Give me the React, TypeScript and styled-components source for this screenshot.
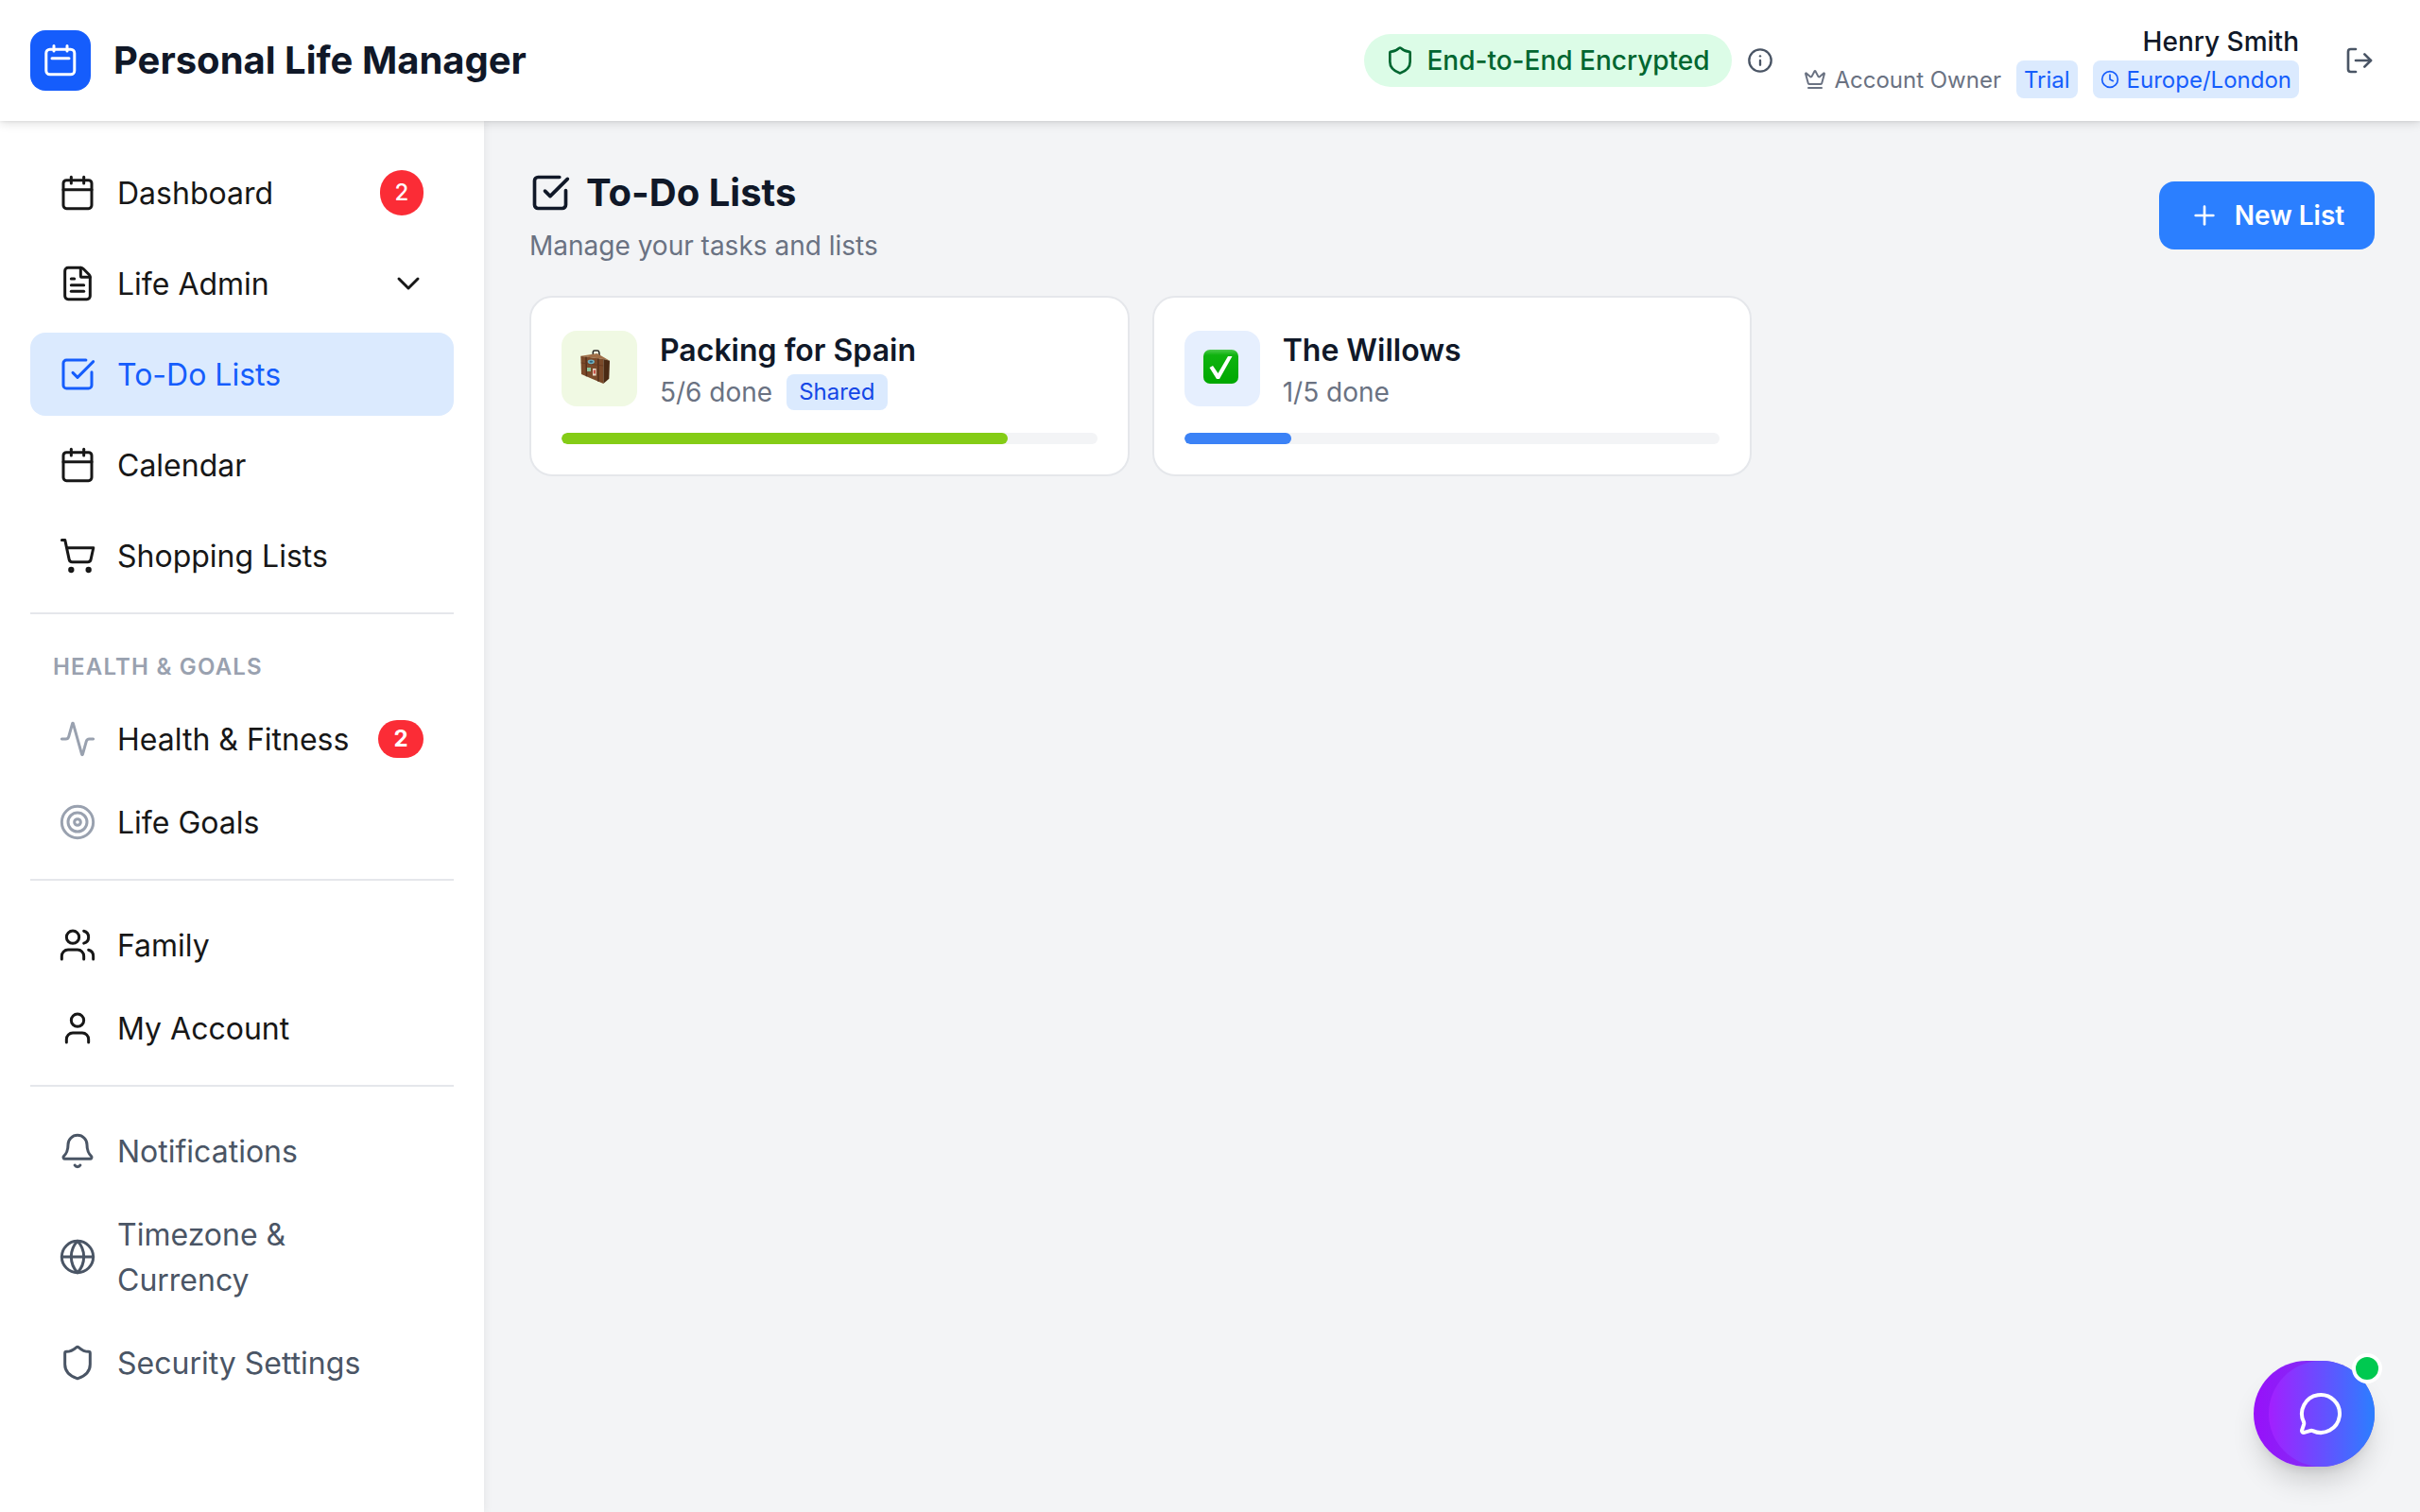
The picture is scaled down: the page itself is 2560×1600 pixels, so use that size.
import React from "react";
import styled, { createGlobalStyle } from "styled-components";
import {
  Activity, Bell, Calendar, ChevronDown, Clock, Crown, FileText, Globe, Info, LogOut,
  MessageCircle, Plus, Shield, ShoppingCart, SquareCheckBig, Target, User, Users,
} from "lucide-react";

const Global = createGlobalStyle`
  html, body { margin: 0; padding: 0; background: #f3f4f6; }
  body { font-family: Inter, "Noto Sans", sans-serif; color: #111827; }
  * { box-sizing: border-box; }
`;

const Page = styled.div`
  width: 2560px;
  height: 1600px;
  display: flex;
  flex-direction: column;
  overflow: hidden;
  position: relative;
`;

const Header = styled.header`
  height: 128px;
  flex: none;
  background: #fff;
  display: flex;
  align-items: center;
  padding: 0 48px 0 32px;
  box-shadow: 0 3px 10px rgba(0, 0, 0, 0.12), 0 1px 3px rgba(0, 0, 0, 0.06);
  position: relative;
  z-index: 2;
`;

const Logo = styled.div`
  width: 64px;
  height: 64px;
  border-radius: 16px;
  background: #155dfc;
  display: flex;
  align-items: center;
  justify-content: center;
  color: #fff;
`;

const Brand = styled.h1`
  margin: 0 0 0 24px;
  font-size: 40px;
  line-height: 56px;
  font-weight: 700;
  color: #101828;
`;

const HeaderRight = styled.div`
  margin-left: auto;
  display: flex;
  align-items: center;
`;

const Encrypted = styled.div`
  height: 56px;
  width: 389px;
  border-radius: 28px;
  background: #dcfce7;
  color: #016630;
  display: flex;
  align-items: center;
  gap: 12px;
  padding-left: 22px;
  font-size: 28px;
  font-weight: 500;
  white-space: nowrap;
`;

const InfoButton = styled.span`
  display: flex;
  color: #4a5565;
  margin-left: 16px;
`;

const UserBlock = styled.div`
  margin-left: 32px;
  display: flex;
  flex-direction: column;
  align-items: flex-end;
`;

const UserName = styled.div`
  font-size: 28px;
  line-height: 40px;
  font-weight: 500;
  color: #101828;
`;

const UserMeta = styled.div`
  display: flex;
  align-items: center;
  gap: 16px;
  height: 40px;
`;

const Role = styled.span`
  display: flex;
  align-items: center;
  gap: 8px;
  font-size: 24px;
  color: #6a7282;
  white-space: nowrap;
`;

const Tag = styled.span`
  height: 40px;
  display: flex;
  align-items: center;
  gap: 8px;
  padding: 0 8px;
  border-radius: 8px;
  background: #dbeafe;
  color: #155dfc;
  font-size: 24px;
  white-space: nowrap;
`;

const LogoutButton = styled.span`
  display: flex;
  color: #4a5565;
  margin-left: 48px;
`;

const Body = styled.div`
  flex: 1;
  display: flex;
  min-height: 0;
`;

const Sidebar = styled.aside`
  width: 512px;
  flex: none;
  background: #fff;
  padding: 32px 32px 0;
  box-shadow: 2px 0 8px rgba(0, 0, 0, 0.05);
`;

const NavGroup = styled.div`
  display: flex;
  flex-direction: column;
  gap: 8px;
`;

const Divider = styled.hr<{ $top: number; $bottom: number }>`
  border: 0;
  height: 2px;
  background: #e5e7eb;
  margin: ${(p) => `${p.$top}px 0 ${p.$bottom}px`};
`;

const NavRow = styled.div<{ $pad: number; $active?: boolean; $muted?: boolean }>`
  display: flex;
  align-items: center;
  gap: 22px;
  padding: ${(p) => p.$pad}px 30px;
  border-radius: 16px;
  font-size: 32px;
  line-height: 48px;
  background: ${(p) => (p.$active ? "#dbeafe" : "transparent")};
  color: ${(p) => (p.$active ? "#155dfc" : p.$muted ? "#4a5565" : "#171717")};
`;

const NavIcon = styled.span<{ $tone?: string }>`
  display: flex;
  flex: none;
  color: ${(p) => p.$tone || "inherit"};
`;

const NavLabel = styled.span`
  flex: 1;
  max-width: 290px;
  position: relative;
  top: 1px;
`;

const Badge = styled.span<{ $w: number; $h: number; $bold?: boolean }>`
  margin-left: auto;
  margin-right: 2px;
  width: ${(p) => p.$w}px;
  height: ${(p) => p.$h}px;
  border-radius: 24px;
  background: #fb2c36;
  color: #fff;
  display: flex;
  align-items: center;
  justify-content: center;
  font-size: 24px;
  line-height: 1;
  font-weight: ${(p) => (p.$bold ? 700 : 500)};
`;

const Chevron = styled.span`
  margin-left: auto;
  margin-right: -2px;
  display: flex;
`;

const SectionLabel = styled.div`
  padding: 0 24px;
  font-size: 24px;
  line-height: 32px;
  font-weight: 600;
  letter-spacing: 1.2px;
  color: #99a1af;
  text-transform: uppercase;
  margin-bottom: 20px;
`;

const Main = styled.main`
  flex: 1;
  padding: 48px 48px 0;
  min-width: 0;
`;

const PageHead = styled.div`
  display: flex;
  justify-content: space-between;
  align-items: flex-start;
  margin-bottom: 33px;
`;

const PageTitle = styled.h2`
  margin: 0;
  display: flex;
  align-items: center;
  gap: 16px;
  font-size: 40px;
  line-height: 56px;
  font-weight: 700;
  color: #101828;
`;

const PageSub = styled.p`
  margin: 8px 0 0;
  font-size: 28px;
  line-height: 40px;
  color: #6a7282;
`;

const NewButton = styled.button`
  margin-top: 16px;
  width: 228px;
  height: 72px;
  border: 0;
  border-radius: 16px;
  background: #2b7fff;
  color: #fff;
  display: flex;
  align-items: center;
  justify-content: center;
  gap: 16px;
  font: 600 28px Inter, sans-serif;
`;

const CardGrid = styled.div`
  display: grid;
  grid-template-columns: repeat(3, 1fr);
  gap: 24px;
`;

const Card = styled.article`
  height: 191px;
  background: #fff;
  border: 2px solid #e5e7eb;
  border-radius: 24px;
  padding: 35px 32px 0;
`;

const CardTop = styled.div`
  display: flex;
  gap: 24px;
  height: 80px;
  margin-bottom: 28px;
`;

const CardIcon = styled.div<{ $bg: string }>`
  width: 80px;
  height: 80px;
  border-radius: 16px;
  background: ${(p) => p.$bg};
  display: flex;
  align-items: center;
  justify-content: center;
  flex: none;
`;

const CardTitle = styled.div`
  font-size: 32px;
  line-height: 44px;
  font-weight: 600;
  color: #101828;
  margin-top: -1px;
  margin-bottom: 2px;
`;

const CardMeta = styled.div`
  display: flex;
  align-items: center;
  gap: 15px;
  font-size: 28px;
  line-height: 40px;
  color: #6a7282;
`;

const SharedTag = styled.span`
  height: 38px;
  padding: 0 13px;
  display: flex;
  align-items: center;
  border-radius: 8px;
  background: #dbeafe;
  color: #1447e6;
  font-size: 24px;
`;

const Track = styled.div`
  height: 12px;
  border-radius: 6px;
  background: #f3f4f6;
  overflow: hidden;
`;

const Fill = styled.div<{ $color: string }>`
  height: 100%;
  border-radius: 6px;
  background: ${(p) => p.$color};
`;

const Fab = styled.button`
  position: absolute;
  right: 48px;
  bottom: 48px;
  width: 128px;
  height: 112px;
  border: 0;
  border-radius: 56px;
  background: linear-gradient(90deg, #9810fa, #6a4cf0);
  color: #fff;
  display: flex;
  align-items: center;
  justify-content: center;
  padding: 0 0 0 14px;
  box-shadow: 0 20px 30px -6px rgba(0, 0, 0, 0.16), 0 8px 12px -6px rgba(0, 0, 0, 0.1);
  z-index: 3;
  &::before {
    content: "";
    position: absolute;
    top: 0;
    right: 0;
    width: 112px;
    height: 112px;
    border-radius: 50%;
    background: linear-gradient(90deg, #a31fff, #2b7fff);
  }
  svg { position: relative; }
`;

const Dot = styled.span`
  position: absolute;
  top: -8px;
  right: -8px;
  width: 32px;
  height: 32px;
  border-radius: 50%;
  background: #00c950;
  border: 4px solid #fff;
`;

const Suitcase = () => (
  <svg width="40" height="40" viewBox="0 0 40 40">
    <path d="M13.3 6V2.5Q13.3 1 15 1H18Q19.5 1 19.7 2.5L20.3 7" fill="none" stroke="#2f2a28" strokeWidth="1.6" />
    <path d="M0.3 6.7 17.7 4 31 11.7 24.3 10Z" fill="#a06f48" />
    <path d="M0.3 6.7 24.3 10 24.3 36 1 26Z" fill="#7b4a2a" />
    <path d="M24.3 10 31 11.7 30.3 30.7 24.3 36Z" fill="#4a2a14" />
    <path d="M6 7.8 6.5 28.3M18.8 9.4 19 33.8" stroke="#54301a" strokeWidth="1.5" />
    <path d="M0.8 14 24.3 17" stroke="#64391f" strokeWidth="0.8" />
    <ellipse cx="11.3" cy="12.8" rx="3.6" ry="2.4" fill="#6fb0c0" />
    <ellipse cx="11.3" cy="12.8" rx="1.8" ry="1" fill="#2f5f78" />
    <rect x="7" y="19" width="4" height="4" fill="#8cc49a" />
    <rect x="13" y="20" width="3.6" height="7.5" fill="#e6dac8" />
    <rect x="13.8" y="21.5" width="2" height="4" fill="#c9473d" />
  </svg>
);

const CheckEmoji = () => (
  <svg width="40" height="40" viewBox="0 0 40 40">
    <defs>
      <linearGradient id="g" x1="0" y1="0" x2="0" y2="1">
        <stop offset="0" stopColor="#4cc94c" />
        <stop offset="0.16" stopColor="#0fb30f" />
        <stop offset="1" stopColor="#00a800" />
      </linearGradient>
    </defs>
    <rect x="0" y="0" width="37" height="36" rx="7" fill="url(#g)" />
    <path d="M6.5 19 10 17 15.5 25 26 7H30.5L17 31H14Z" fill="#fff" />
  </svg>
);

const LogoGlyph = () => (
  <svg width="40" height="40" viewBox="0 0 40 40" fill="none" stroke="currentColor" strokeWidth="3" strokeLinecap="round">
    <rect x="4.8" y="8.2" width="30" height="26.6" rx="4" />
    <path d="M13 4.5V10M27 4.5V10M11 17.7H29" />
  </svg>
);

type Item = { label: string; Icon: React.ElementType; tone?: string; badge?: [number, number, boolean?]; chevron?: boolean; active?: boolean };

const group1: Item[] = [
  { label: "Dashboard", Icon: Calendar, badge: [46, 48] },
  { label: "Life Admin", Icon: FileText, chevron: true },
  { label: "To-Do Lists", Icon: SquareCheckBig, active: true },
  { label: "Calendar", Icon: Calendar },
  { label: "Shopping Lists", Icon: ShoppingCart },
];
const group2: Item[] = [
  { label: "Health & Fitness", Icon: Activity, tone: "#99a1af", badge: [48, 40, true] },
  { label: "Life Goals", Icon: Target, tone: "#99a1af" },
];
const group3: Item[] = [
  { label: "Family", Icon: Users },
  { label: "My Account", Icon: User },
];
const group4: Item[] = [
  { label: "Notifications", Icon: Bell },
  { label: "Timezone & Currency", Icon: Globe },
  { label: "Security Settings", Icon: Shield },
];

const NavList = ({ items, pad, muted }: { items: Item[]; pad: number; muted?: boolean }) => (
  <NavGroup>
    {items.map(({ label, Icon, tone, badge, chevron, active }) => (
      <NavRow key={label} $pad={pad} $active={active} $muted={muted}>
        <NavIcon $tone={tone}><Icon size={40} strokeWidth={1.8} /></NavIcon>
        <NavLabel>{label}</NavLabel>
        {badge && <Badge $w={badge[0]} $h={badge[1]} $bold={badge[2]}>2</Badge>}
        {chevron && <Chevron><ChevronDown size={40} strokeWidth={1.8} /></Chevron>}
      </NavRow>
    ))}
  </NavGroup>
);

export default function App() {
  return (
    <Page>
      <Global />
      <Header>
        <Logo><LogoGlyph /></Logo>
        <Brand>Personal Life Manager</Brand>
        <HeaderRight>
          <Encrypted><Shield size={32} strokeWidth={2} />End-to-End Encrypted</Encrypted>
          <InfoButton><Info size={28} strokeWidth={2} /></InfoButton>
          <UserBlock>
            <UserName>Henry Smith</UserName>
            <UserMeta>
              <Role><Crown size={24} strokeWidth={2} />Account Owner</Role>
              <Tag>Trial</Tag>
              <Tag><Clock size={20} strokeWidth={2} />Europe/London</Tag>
            </UserMeta>
          </UserBlock>
          <LogoutButton><LogOut size={32} strokeWidth={2} /></LogoutButton>
        </HeaderRight>
      </Header>
      <Body>
        <Sidebar>
          <NavList items={group1} pad={20} />
          <Divider $top={16} $bottom={40} />
          <SectionLabel>Health &amp; Goals</SectionLabel>
          <NavList items={group2} pad={16} />
          <Divider $top={20} $bottom={28} />
          <NavList items={group3} pad={16} />
          <Divider $top={20} $bottom={28} />
          <NavList items={group4} pad={16} muted />
        </Sidebar>
        <Main>
          <PageHead>
            <div>
              <PageTitle><SquareCheckBig size={44} strokeWidth={2} />To-Do Lists</PageTitle>
              <PageSub>Manage your tasks and lists</PageSub>
            </div>
            <NewButton><Plus size={32} strokeWidth={2} />New List</NewButton>
          </PageHead>
          <CardGrid>
            <Card>
              <CardTop>
                <CardIcon $bg="#f0f9e3"><Suitcase /></CardIcon>
                <div>
                  <CardTitle>Packing for Spain</CardTitle>
                  <CardMeta>5/6 done <SharedTag>Shared</SharedTag></CardMeta>
                </div>
              </CardTop>
              <Track><Fill $color="#84cc16" style={{ width: `${(5 / 6) * 100}%` }} /></Track>
            </Card>
            <Card>
              <CardTop>
                <CardIcon $bg="#e6effe"><CheckEmoji /></CardIcon>
                <div>
                  <CardTitle>The Willows</CardTitle>
                  <CardMeta>1/5 done</CardMeta>
                </div>
              </CardTop>
              <Track><Fill $color="#3b82f6" style={{ width: `${(1 / 5) * 100}%` }} /></Track>
            </Card>
          </CardGrid>
        </Main>
      </Body>
      <Fab aria-label="Chat"><MessageCircle size={48} strokeWidth={2} /><Dot /></Fab>
    </Page>
  );
}
